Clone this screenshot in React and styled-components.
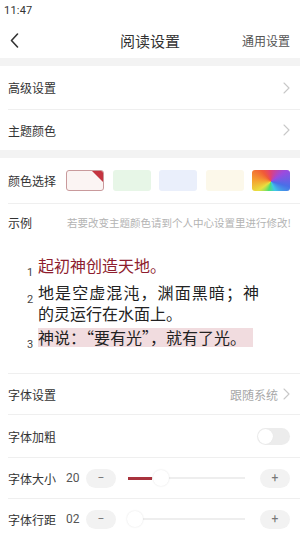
import React from "react";
import styled, { createGlobalStyle } from "styled-components";

const Global = createGlobalStyle`
  html, body { margin: 0; padding: 0; background: #fff; }
  body { font-family: Roboto, "Noto Sans CJK SC", sans-serif; color: #333; }
  * { box-sizing: border-box; }
`;

const Page = styled.div`
  width: 300px;
  min-height: 537px;
  background: #fff;
  font-family: Roboto, "Noto Sans CJK SC", sans-serif;
`;

const StatusBar = styled.div`
  height: 22px;
  padding: 4px 0 0 4px;
  font-size: 11px;
  line-height: 13px;
  color: #333;
  letter-spacing: 0.2px;
`;

const NavBar = styled.div`
  height: 36px;
  display: flex;
  align-items: center;
  padding: 0 10px;
`;

const BackBtn = styled.div`
  width: 24px;
  display: flex;
  align-items: center;
`;

const Title = styled.div`
  flex: 1;
  text-align: center;
  font-size: 15px;
  color: #333;
  padding-left: 24px;
  font-family: "Noto Sans CJK SC", sans-serif;
`;

const NavAction = styled.div`
  font-size: 12px;
  color: #555;
  font-family: "Noto Sans CJK SC", sans-serif;
`;

const Band = styled.div`
  height: 8px;
  background: #f3f3f3;
`;

const Row = styled.div`
  height: ${(p) => p.$h}px;
  display: flex;
  align-items: center;
  padding: 0 10px 0 8px;
`;

const Label = styled.div`
  font-size: 12px;
  color: #333;
  font-family: "Noto Sans CJK SC", sans-serif;
  white-space: nowrap;
  width: ${(p) => (p.$w ? `${p.$w}px` : "auto")};
  flex-shrink: 0;
`;

const Spacer = styled.div`
  flex: 1;
`;

const Divider = styled.div`
  height: 1px;
  margin-left: 8px;
  background: #efefef;
`;

const RightText = styled.div`
  font-size: 12px;
  color: #a8a8a8;
  font-family: "Noto Sans CJK SC", sans-serif;
  margin-right: 5px;
`;

const Swatches = styled.div`
  display: flex;
  gap: 8.5px;
  margin-left: 10px;
`;

const Swatch = styled.div`
  width: 38px;
  height: 21px;
  border-radius: 3px;
  position: relative;
  overflow: hidden;
  background: ${(p) => p.$bg};
  border: ${(p) => (p.$active ? "1px solid #c99a9c" : "none")};
`;

const Corner = styled.div`
  position: absolute;
  top: 0;
  right: 0;
  width: 0;
  height: 0;
  border-top: 11px solid #c43440;
  border-left: 11px solid transparent;
`;

const Hint = styled.div`
  font-size: 10.5px;
  color: #b3b3b3;
  font-family: "Noto Sans CJK SC", sans-serif;
  white-space: nowrap;
`;

const Sample = styled.div`
  padding: 15px 0 22px 27px;
  display: flex;
  flex-direction: column;
  gap: 3px;
`;

const Verse = styled.div`
  display: flex;
  align-items: flex-start;
`;

const Num = styled.div`
  width: 11px;
  flex-shrink: 0;
  font-size: 11px;
  line-height: 13px;
  padding-top: 11px;
  color: #444;
  font-family: Roboto, sans-serif;
`;

const VerseText = styled.div`
  width: 221px;
  font-size: 16px;
  line-height: 21px;
  text-align: justify;
  color: ${(p) => p.$color || "#222"};
  font-family: "Noto Sans CJK SC", sans-serif;
`;

const Mark = styled.span`
  background: linear-gradient(#f1dcdf, #f1dcdf) no-repeat;
  background-size: 100% 19px;
  background-position: 0 55%;
  padding-right: 7px;
`;

const Toggle = styled.div`
  width: 33px;
  height: 17px;
  border-radius: 9px;
  background: #ececec;
  display: flex;
  align-items: center;
  padding: 1px;
`;

const Knob = styled.div`
  width: 15px;
  height: 15px;
  border-radius: 50%;
  background: #fff;
  box-shadow: 0 0 1px rgba(0, 0, 0, 0.08);
`;

const Value = styled.div`
  width: 20px;
  margin-left: 10px;
  font-size: 12px;
  color: #555;
  font-family: Roboto, sans-serif;
  flex-shrink: 0;
`;

const StepBtn = styled.div`
  width: 30px;
  height: 19px;
  border-radius: 10px;
  background: #f2f2f2;
  color: #777;
  font-size: 12px;
  display: flex;
  align-items: center;
  justify-content: center;
  font-family: Roboto, sans-serif;
  flex-shrink: 0;
`;

const Track = styled.div`
  flex: 1;
  height: 2px;
  margin: 0 15px 0 12px;
  background: #eeeeee;
  position: relative;
`;

const Fill = styled.div`
  position: absolute;
  left: 0;
  top: -0.5px;
  height: 3px;
  background: #a8333d;
`;

const Thumb = styled.div`
  position: absolute;
  top: -7px;
  width: 16px;
  height: 16px;
  margin-left: -8px;
  border-radius: 50%;
  background: #fff;
  box-shadow: 0 0 2px rgba(0, 0, 0, 0.12);
`;

const Chevron = ({ color = "#c8c8c8", w = 7, h = 12 }) => (
  <svg width={w} height={h} viewBox="0 0 7 12" fill="none">
    <path d="M1 1l5 5-5 5" stroke={color} strokeWidth="1.1" strokeLinecap="round" strokeLinejoin="round" />
  </svg>
);

const Slider = ({ label, value, pos, fill }) => (
  <Row $h={40}>
    <Label $w={48}>{label}</Label>
    <Value>{value}</Value>
    <StepBtn>−</StepBtn>
    <Track>
      {fill > 0 && <Fill style={{ width: `${fill}px` }} />}
      <Thumb style={{ left: `${pos}px` }} />
    </Track>
    <StepBtn>+</StepBtn>
  </Row>
);

export default function App() {
  return (
    <Page>
      <Global />
      <StatusBar>11:47</StatusBar>
      <NavBar>
        <BackBtn>
          <svg width="9" height="15" viewBox="0 0 9 15" fill="none">
            <path d="M7.5 1L1.5 7.5l6 6.5" stroke="#333" strokeWidth="1.6" strokeLinecap="round" strokeLinejoin="round" />
          </svg>
        </BackBtn>
        <Title>阅读设置</Title>
        <NavAction>通用设置</NavAction>
      </NavBar>
      <Band />
      <Row $h={43}>
        <Label>高级设置</Label>
        <Spacer />
        <Chevron />
      </Row>
      <Divider />
      <Row $h={40}>
        <Label>主题颜色</Label>
        <Spacer />
        <Chevron />
      </Row>
      <Band />
      <Row $h={45}>
        <Label $w={48}>颜色选择</Label>
        <Swatches>
          <Swatch $bg="#fbf4f3" $active>
            <Corner />
          </Swatch>
          <Swatch $bg="#e7f6e7" />
          <Swatch $bg="#eaeffb" />
          <Swatch $bg="#fcf8ea" />
          <Swatch $bg="conic-gradient(from 0deg at 50% 55%, #e0407a, #9a4be0 55deg, #4a6ee8 105deg, #3ec8e8 155deg, #4ee070 195deg, #e8e040 235deg, #f5a030 275deg, #f05a38 320deg, #e0407a)" />
        </Swatches>
      </Row>
      <Divider />
      <Row $h={36}>
        <Label $w={59}>示例</Label>
        <Hint>若要改变主题颜色请到个人中心设置里进行修改!</Hint>
      </Row>
      <Sample>
        <Verse>
          <Num>1</Num>
          <VerseText $color="#8e1d2e">起初神创造天地。</VerseText>
        </Verse>
        <Verse>
          <Num>2</Num>
          <VerseText>地是空虚混沌，渊面黑暗；神的灵运行在水面上。</VerseText>
        </Verse>
        <Verse>
          <Num>3</Num>
          <VerseText>
            <Mark>神说：“要有光”，就有了光。</Mark>
          </VerseText>
        </Verse>
      </Sample>
      <Divider />
      <Row $h={40}>
        <Label>字体设置</Label>
        <Spacer />
        <RightText>跟随系统</RightText>
        <Chevron />
      </Row>
      <Divider />
      <Row $h={42}>
        <Label>字体加粗</Label>
        <Spacer />
        <Toggle>
          <Knob />
        </Toggle>
      </Row>
      <Divider />
      <Slider label="字体大小" value="20" pos={33} fill={24} />
      <Divider />
      <Slider label="字体行距" value="02" pos={7} fill={0} />
      <Divider />
    </Page>
  );
}
